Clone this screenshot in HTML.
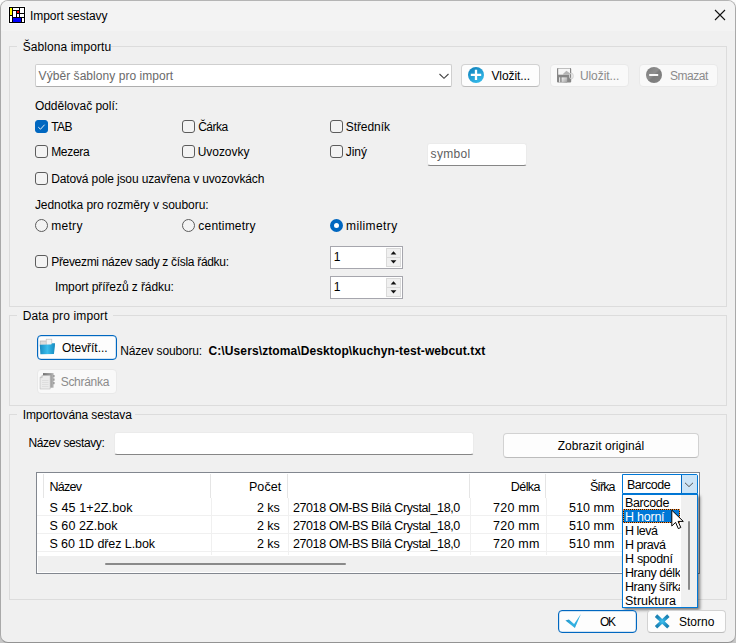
<!DOCTYPE html>
<html lang="cs">
<head>
<meta charset="utf-8">
<title>Import sestavy</title>
<style>
*{box-sizing:border-box;margin:0;padding:0}
html,body{width:736px;height:643px;overflow:hidden;background:linear-gradient(#fbfbfb 50%,#c6c6c6 50%)}
body{font-family:"Liberation Sans",sans-serif;font-size:12px;color:#000;position:relative}
#win{position:absolute;left:0;top:0;width:736px;height:643px;background:#f0f0f0;border:1px solid #a9a9a9;border-top-color:#b4b4b4;border-bottom-color:#939393;border-radius:8px;overflow:hidden}
#title{position:absolute;left:0;top:0;width:734px;height:30px;background:#f3f3f3}
.abs,.t,.grp,.btn,.cb,.rb,.inp,.spin{position:absolute}
.t{white-space:pre;line-height:16px;margin-top:-12px}
.grp{border:1px solid #dcdcdc}
.gl{background:#f0f0f0}
.btn{background:#fdfdfd;border:1px solid #d2d2d2;border-bottom-color:#bcbcbc;border-radius:4px}
.btn.dis{background:#f9f9f9;border-color:#e9e9e9}
.btn.foc{border:1px solid #0067c0;box-shadow:inset 0 0 0 .5px rgba(0,103,192,.35)}
.cb{width:13px;height:13px;border:1px solid #5c5c5c;border-radius:3px;background:#f3f3f3}
.cb.on{background:#0067c0;border-color:#0067c0}
.rb{width:13px;height:13px;border:1px solid #5c5c5c;border-radius:50%;background:#f3f3f3}
.rb.on{border:4px solid #0067c0;background:#fff}
.inp{background:#fff;border:1px solid #ebebeb;border-bottom:1px solid #868686;border-radius:3px}
.spin{background:#fff;border:1px solid #a6a6ad;}
.sb{position:absolute;width:15px;height:10px;background:#f0f0f0;border:1px solid #dadada}
.li{position:absolute;left:2px;white-space:pre;font-size:12.5px;line-height:14px;height:14px;letter-spacing:-0.45px}
.hl{position:absolute;height:1px;background:#f0f0f0}
.vl{position:absolute;width:1px;background:#e5e5e5}
</style>
</head>
<body>
<div id="win">
<div id="title"></div>
<!-- app icon -->
<svg class="abs" style="left:7px;top:5px" width="18" height="18" viewBox="-1 -1 18 18" shape-rendering="crispEdges">
<rect x="-1" y="-1" width="18" height="18" fill="#fafafa"/>
<rect x="0" y="0" width="16" height="16" fill="#000"/>
<rect x="1" y="1" width="2" height="7" fill="#ffff00"/>
<rect x="1" y="9" width="2" height="6" fill="#fff"/>
<rect x="4" y="1" width="6" height="2" fill="#fff"/>
<rect x="11" y="1" width="4" height="5" fill="#fff"/>
<rect x="11" y="7" width="4" height="3" fill="#fff"/>
<rect x="4" y="4" width="3" height="6" fill="#fff"/>
<rect x="8" y="4" width="2" height="2" fill="#ff0000"/>
<rect x="8" y="7" width="2" height="3" fill="#fff"/>
<rect x="4" y="11" width="8" height="4" fill="#0000ff"/>
<rect x="13" y="11" width="2" height="4" fill="#fff"/>
</svg>
<!-- close X -->
<svg class="abs" style="left:713px;top:8px" width="12" height="12" viewBox="0 0 12 12"><path d="M1 1L11 11M11 1L1 11" stroke="#111" stroke-width="1.1" fill="none"/></svg>

<!-- group 1 -->
<div class="grp" style="left:8px;top:45px;width:718px;height:261px"></div>
<div class="abs gl" style="left:16px;top:38px;width:94px;height:16px"></div>
<!-- combo -->
<div class="inp" style="left:34px;top:63px;width:417px;height:23px;border-color:#cfcfcf;border-bottom-color:#aeaeae;border-radius:2px"></div>
<svg class="abs" style="left:437px;top:71px" width="12" height="8" viewBox="0 0 12 8"><path d="M1.5 2L6 6.3L10.5 2" stroke="#444" stroke-width="1.1" fill="none"/></svg>
<!-- buttons -->
<div class="btn" style="left:460px;top:63px;width:79px;height:23px"></div>
<svg class="abs" style="left:467px;top:66px" width="16" height="16" viewBox="0 0 16 16">
<defs><linearGradient id="gb" x1="0.1" y1="0" x2="0.7" y2="1"><stop offset="0" stop-color="#0f80bb"/><stop offset="1" stop-color="#36bbea"/></linearGradient></defs>
<circle cx="8" cy="8" r="8" fill="url(#gb)"/><path d="M8 2.7V13.1M2.8 7.9H13.2" stroke="#fff" stroke-width="2.3"/></svg>
<div class="btn dis" style="left:549px;top:63px;width:79px;height:23px"></div>
<svg class="abs" style="left:555px;top:66px" width="18" height="17" viewBox="0 0 18 17">
<defs><linearGradient id="gs" x1="0" y1="0" x2="1" y2="1"><stop offset="0" stop-color="#f4f4f4"/><stop offset="1" stop-color="#9a9a9a"/></linearGradient></defs>
<rect x="1" y="1.1" width="14.2" height="14.5" rx="1" fill="#868686"/>
<rect x="2.2" y="1.5" width="11.8" height="6.2" fill="#f6f6f6"/>
<path d="M7.5 6.6L10.4 3.8L14 6.2L14 7.7L7 7.7Z" fill="#b4b4b4"/>
<rect x="3.1" y="10.3" width="1.1" height="5" fill="#ececec"/>
<rect x="5.6" y="10.4" width="5.6" height="5.2" fill="url(#gs)"/>
<ellipse cx="15.3" cy="9" rx="1.9" ry="3" fill="none" stroke="#cdcdcd" stroke-width="1"/>
</svg>
<div class="btn dis" style="left:638px;top:63px;width:79px;height:23px"></div>
<svg class="abs" style="left:645px;top:66px" width="16" height="16" viewBox="0 0 16 16">
<defs><linearGradient id="gg" x1="0" y1="0" x2="1" y2="1"><stop offset="0" stop-color="#7a7a7a"/><stop offset="0.45" stop-color="#8e8e8e"/><stop offset="0.55" stop-color="#7c7c7c"/><stop offset="1" stop-color="#868686"/></linearGradient></defs>
<circle cx="8" cy="8" r="8" fill="url(#gg)"/><path d="M3.2 8H12.2" stroke="#f8f8f8" stroke-width="2.1"/></svg>

<!-- checkboxes -->
<div class="cb on" style="left:34px;top:119px"></div>
<svg class="abs" style="left:34px;top:119px" width="13" height="13" viewBox="0 0 13 13"><path d="M3.3 7.2L5.5 9.2L9.6 4.7" stroke="#e4effa" stroke-width="1" fill="none"/></svg>
<div class="cb" style="left:181px;top:119px"></div>
<div class="cb" style="left:329px;top:119px"></div>
<div class="cb" style="left:34px;top:144px"></div>
<div class="cb" style="left:181px;top:144px"></div>
<div class="cb" style="left:329px;top:144px"></div>
<div class="inp" style="left:426px;top:142px;width:100px;height:23px"></div>
<div class="cb" style="left:34px;top:171px"></div>
<!-- radios -->
<div class="rb" style="left:34px;top:218px"></div>
<div class="rb" style="left:181px;top:218px"></div>
<div class="rb on" style="left:329px;top:218px"></div>
<div class="cb" style="left:34px;top:254px"></div>
<!-- spinners -->
<div class="spin" style="left:329px;top:245px;width:73px;height:23px"><div class="sb" style="left:55px;top:1px"></div><div class="sb" style="left:55px;top:10px"></div>
<svg class="abs" style="left:59px;top:3px" width="7" height="15" viewBox="0 0 7 15"><path d="M0.6 4.5L3.5 1.2L6.4 4.5ZM0.6 10.2L3.5 13.5L6.4 10.2Z" fill="#111"/></svg></div>
<div class="spin" style="left:329px;top:275px;width:73px;height:23px"><div class="sb" style="left:55px;top:1px"></div><div class="sb" style="left:55px;top:10px"></div>
<svg class="abs" style="left:59px;top:3px" width="7" height="15" viewBox="0 0 7 15"><path d="M0.6 4.5L3.5 1.2L6.4 4.5ZM0.6 10.2L3.5 13.5L6.4 10.2Z" fill="#111"/></svg></div>

<!-- group 2 -->
<div class="grp" style="left:8px;top:314px;width:718px;height:91px"></div>
<div class="abs gl" style="left:16px;top:307px;width:96px;height:16px"></div>
<div class="btn foc" style="left:36px;top:334px;width:80px;height:25px"></div>
<svg class="abs" style="left:38px;top:337px" width="18" height="18" viewBox="0 0 18 18">
<defs><linearGradient id="gf" x1="0" y1="0" x2="1" y2="0"><stop offset="0" stop-color="#1a88bc"/><stop offset="0.12" stop-color="#2098cc"/><stop offset="0.5" stop-color="#3abdec"/><stop offset="0.85" stop-color="#1f9ace"/><stop offset="1" stop-color="#1787ba"/></linearGradient></defs>
<rect x="1.2" y="3" width="6.2" height="5" fill="#dcdcdc" stroke="#b4b4b4" stroke-width=".7"/>
<rect x="7.2" y="1.2" width="5.6" height="6" fill="#f4f4f4" stroke="#c2c2c2" stroke-width=".7"/>
<path d="M0.8 6.8L12.2 6.5L13.2 5.3L16 5.3L15.9 8L14.9 16L1.4 16.3Z" fill="url(#gf)"/>
</svg>
<div class="btn dis" style="left:36px;top:368px;width:80px;height:25px"></div>
<svg class="abs" style="left:38px;top:371px" width="18" height="19" viewBox="0 0 18 19">
<defs><linearGradient id="gc" x1="0" y1="0" x2="1" y2="0"><stop offset="0" stop-color="#6e6e6e"/><stop offset="0.7" stop-color="#9a9a9a"/><stop offset="1" stop-color="#b8b8b8"/></linearGradient></defs>
<rect x="4" y="1.1" width="10.6" height="14.6" fill="url(#gc)"/>
<rect x="14.3" y="3" width="1.2" height="2.2" fill="#8a8a8a"/><rect x="14.3" y="6.5" width="1.2" height="2.2" fill="#8a8a8a"/><rect x="14.3" y="10" width="1.2" height="2.2" fill="#8a8a8a"/>
<path d="M3.2 3.4H11.2V17H1.1V5.6Z" fill="#ebebeb" stroke="#bcbcbc" stroke-width=".6"/>
<path d="M3.2 3.4V5.6H1.1" fill="none" stroke="#b0b0b0" stroke-width=".6"/>
<path d="M3 8.5H9.5M3 10.5H9.5M3 12.5H9.5M3 14.5H9.5" stroke="#dadada" stroke-width=".8"/>
</svg>

<!-- group 3 -->
<div class="grp" style="left:8px;top:413px;width:718px;height:186px"></div>
<div class="abs gl" style="left:16px;top:406px;width:118px;height:16px"></div>
<div class="inp" style="left:113px;top:431px;width:360px;height:23px"></div>
<div class="btn" style="left:502px;top:432px;width:196px;height:25px"></div>

<!-- grid -->
<div class="abs" style="left:35px;top:471px;width:664px;height:102px;background:#fff;border:1px solid #82878f"></div>
<div class="abs" style="left:37px;top:555px;width:660px;height:16px;background:#f0f0f0"></div>
<div class="abs" style="left:104px;top:562px;width:241px;height:2px;background:#8a8a8a;border-radius:1px"></div>
<div class="vl" style="left:42px;top:473px;height:24px"></div>
<div class="vl" style="left:209px;top:473px;height:24px"></div>
<div class="vl" style="left:286px;top:473px;height:24px"></div>
<div class="vl" style="left:468px;top:473px;height:24px"></div>
<div class="vl" style="left:544px;top:473px;height:24px"></div>
<div class="vl" style="left:210px;top:497px;height:57px;background:#f0f0f0"></div>
<div class="vl" style="left:287px;top:497px;height:57px;background:#f0f0f0"></div>
<div class="vl" style="left:469px;top:497px;height:57px;background:#f0f0f0"></div>
<div class="vl" style="left:545px;top:497px;height:57px;background:#f0f0f0"></div>
<div class="hl" style="left:36px;top:514px;width:586px"></div>
<div class="hl" style="left:36px;top:532px;width:586px"></div>
<div class="hl" style="left:36px;top:550px;width:586px"></div>
<!-- grid combo -->
<div class="abs" style="left:621px;top:473px;width:76px;height:20px;background:#fff;border:1px solid #0078d7;border-radius:0 2px 0 0"></div>
<div class="abs" style="left:680px;top:474px;width:16px;height:18px;background:#cce4f7;border-left:1px solid #0067c0"></div>
<svg class="abs" style="left:682px;top:480px" width="12" height="8" viewBox="0 0 12 8"><path d="M2 1.8L6 5.6L10 1.8" stroke="#555" stroke-width="1" fill="none"/></svg>
<!-- dropdown list -->
<div class="abs" style="left:621px;top:493px;width:76px;height:114px;background:#fff;border:1px solid #0078d7;box-shadow:2px 2px 3px rgba(0,0,0,.5)"></div>
<div class="abs" style="left:680px;top:494px;width:16px;height:112px;background:#f0f0f0"></div>
<div class="abs" style="left:622px;top:508px;width:57px;height:14px;background:#0078d7;border:1px solid #1a1a1a"></div>
<div class="abs" style="left:622px;top:508px;width:57px;height:14px;border:1px dotted #ff8a2a"></div>
<div class="abs" style="left:687px;top:520px;width:2px;height:69px;background:#8a8a8a;border-radius:1px"></div>
<div class="abs" id="list" style="left:622px;top:494px;width:57px;height:112px;overflow:hidden"><div class="li" style="top:1px;color:#000;letter-spacing:-0.360px">Barcode</div><div class="li" style="top:15px;color:#fff;letter-spacing:-0.233px">H horní</div><div class="li" style="top:29px;color:#000;letter-spacing:-0.508px">H levá</div><div class="li" style="top:43px;color:#000;letter-spacing:-0.480px">H pravá</div><div class="li" style="top:57px;color:#000;letter-spacing:-0.304px">H spodní</div><div class="li" style="top:71px;color:#000;letter-spacing:-0.420px">Hrany délka</div><div class="li" style="top:85px;color:#000;letter-spacing:-0.420px">Hrany šířka</div><div class="li" style="top:99px;color:#000;letter-spacing:0.035px">Struktura</div></div>
<!-- cursor -->
<svg class="abs" style="left:670px;top:508px" width="14" height="21" viewBox="0 0 14 21"><path d="M0.8 1.2V17L4.6 13.4L7.3 19.6L9.8 18.5L7.1 12.4H12.3Z" fill="#fff" stroke="#000" stroke-width="1"/></svg>

<!-- bottom buttons -->
<div class="btn foc" style="left:557px;top:609px;width:79px;height:23px"></div>
<svg class="abs" style="left:563px;top:612px" width="19" height="17" viewBox="0 0 19 17">
<defs><linearGradient id="gk" x1="0" y1="0" x2="1" y2="1"><stop offset="0" stop-color="#1c86bb"/><stop offset="0.6" stop-color="#35b4e4"/><stop offset="1" stop-color="#2299cf"/></linearGradient></defs>
<path d="M1.4 7.5L4.9 6.6L10.1 10.9L16.9 1.1L10.9 14.9Z" fill="url(#gk)"/></svg>
<div class="btn" style="left:646px;top:609px;width:79px;height:23px"></div>
<svg class="abs" style="left:652px;top:612px" width="19" height="18" viewBox="0 0 19 18">
<defs><radialGradient id="gx" cx="0.5" cy="0.5" r="0.5"><stop offset="0" stop-color="#40c0ee"/><stop offset="0.5" stop-color="#2aa4d8"/><stop offset="1" stop-color="#1c84b6"/></radialGradient></defs>
<path d="M3 2.6L15.4 14.2M15.4 2.6L3 14.2" stroke="url(#gx)" stroke-width="3.5" fill="none"/></svg>

<span class="t " style="left:28.9px;top:19px;font-size:12px;letter-spacing:-0.025px;">Import sestavy</span>
<span class="t gl" style="left:21.7px;top:50px;font-size:12px;letter-spacing:0.072px;">Šablona importu</span>
<span class="t " style="left:37.6px;top:79px;font-size:12px;letter-spacing:0.052px;color:#6a6a6a;">Výběr šablony pro import</span>
<span class="t " style="left:490.4px;top:79px;font-size:12px;letter-spacing:-0.082px;">Vložit...</span>
<span class="t " style="left:578.9px;top:79px;font-size:12px;letter-spacing:-0.064px;color:#8b8b8b;">Uložit...</span>
<span class="t " style="left:668.9px;top:79px;font-size:12px;letter-spacing:-0.438px;color:#8b8b8b;">Smazat</span>
<span class="t " style="left:33.9px;top:109px;font-size:12px;letter-spacing:-0.014px;">Oddělovač polí:</span>
<span class="t " style="left:50.2px;top:130px;font-size:12px;letter-spacing:-0.527px;">TAB</span>
<span class="t " style="left:197.2px;top:130px;font-size:12px;letter-spacing:-0.529px;">Čárka</span>
<span class="t " style="left:344.7px;top:130px;font-size:12px;letter-spacing:-0.058px;">Středník</span>
<span class="t " style="left:50.2px;top:155px;font-size:12px;letter-spacing:-0.323px;">Mezera</span>
<span class="t " style="left:196.7px;top:155px;font-size:12px;letter-spacing:-0.045px;">Uvozovky</span>
<span class="t " style="left:344.7px;top:155px;font-size:12px;letter-spacing:-0.048px;">Jiný</span>
<span class="t " style="left:429.6px;top:157px;font-size:12px;letter-spacing:0.297px;color:#5e5e5e;">symbol</span>
<span class="t " style="left:50.2px;top:182px;font-size:12px;letter-spacing:-0.134px;">Datová pole jsou uzavřena v uvozovkách</span>
<span class="t " style="left:33.9px;top:208px;font-size:12px;letter-spacing:-0.057px;">Jednotka pro rozměry v souboru:</span>
<span class="t " style="left:50.2px;top:229px;font-size:12px;letter-spacing:0.300px;">metry</span>
<span class="t " style="left:197.3px;top:229px;font-size:12px;letter-spacing:0.205px;">centimetry</span>
<span class="t " style="left:345.0px;top:229px;font-size:12px;letter-spacing:0.400px;">milimetry</span>
<span class="t " style="left:50.2px;top:265px;font-size:12px;letter-spacing:-0.311px;">Převezmi název sady z čísla řádku:</span>
<span class="t " style="left:53.9px;top:290px;font-size:12px;letter-spacing:-0.078px;">Import přířezů z řádku:</span>
<span class="t " style="left:332.7px;top:260px;font-size:12px;letter-spacing:0.000px;">1</span>
<span class="t " style="left:332.7px;top:290px;font-size:12px;letter-spacing:0.000px;">1</span>
<span class="t gl" style="left:21.7px;top:319px;font-size:12px;letter-spacing:0.157px;">Data pro import</span>
<span class="t " style="left:60.9px;top:351px;font-size:12px;letter-spacing:-0.035px;">Otevřít...</span>
<span class="t " style="left:119.2px;top:354px;font-size:12px;letter-spacing:-0.165px;">Název souboru:</span>
<span class="t " style="left:207.5px;top:354px;font-size:12px;letter-spacing:0.105px;font-weight:700;">C:\Users\ztoma\Desktop\kuchyn-test-webcut.txt</span>
<span class="t " style="left:59.7px;top:385px;font-size:12px;letter-spacing:-0.286px;color:#8b8b8b;">Schránka</span>
<span class="t gl" style="left:21.7px;top:418px;font-size:12px;letter-spacing:-0.123px;">Importována sestava</span>
<span class="t " style="left:27.4px;top:446px;font-size:12px;letter-spacing:-0.383px;">Název sestavy:</span>
<span class="t " style="left:556.7px;top:449px;font-size:12px;letter-spacing:0.064px;">Zobrazit originál</span>
<span class="t " style="left:598.9px;top:625px;font-size:12px;letter-spacing:-1.200px;">OK</span>
<span class="t " style="left:678.0px;top:625px;font-size:12px;letter-spacing:0.008px;">Storno</span>
<span class="t " style="left:48.4px;top:490px;font-size:12.5px;letter-spacing:-0.684px;">Název</span>
<span class="t " style="left:247.9px;top:490px;font-size:12.5px;letter-spacing:0.108px;">Počet</span>
<span class="t " style="left:509.8px;top:490px;font-size:12.5px;letter-spacing:-0.567px;">Délka</span>
<span class="t " style="left:588.9px;top:490px;font-size:12.5px;letter-spacing:-0.897px;">Šířka</span>
<span class="t " style="left:48.4px;top:511px;font-size:12.5px;letter-spacing:0.129px;">S 45 1+2Z.bok</span>
<span class="t " style="left:256.0px;top:511px;font-size:12.5px;letter-spacing:-0.046px;">2 ks</span>
<span class="t " style="left:291.9px;top:511px;font-size:12.5px;letter-spacing:-0.374px;">27018 OM-BS Bílá Crystal_18,0</span>
<span class="t " style="left:492.1px;top:511px;font-size:12.5px;letter-spacing:0.209px;">720 mm</span>
<span class="t " style="left:567.9px;top:511px;font-size:12.5px;letter-spacing:0.049px;">510 mm</span>
<span class="t " style="left:48.4px;top:529px;font-size:12.5px;letter-spacing:0.079px;">S 60 2Z.bok</span>
<span class="t " style="left:256.0px;top:529px;font-size:12.5px;letter-spacing:-0.046px;">2 ks</span>
<span class="t " style="left:291.9px;top:529px;font-size:12.5px;letter-spacing:-0.374px;">27018 OM-BS Bílá Crystal_18,0</span>
<span class="t " style="left:492.1px;top:529px;font-size:12.5px;letter-spacing:0.209px;">720 mm</span>
<span class="t " style="left:567.9px;top:529px;font-size:12.5px;letter-spacing:0.049px;">510 mm</span>
<span class="t " style="left:48.4px;top:547px;font-size:12.5px;letter-spacing:-0.077px;">S 60 1D dřez L.bok</span>
<span class="t " style="left:256.0px;top:547px;font-size:12.5px;letter-spacing:-0.046px;">2 ks</span>
<span class="t " style="left:291.9px;top:547px;font-size:12.5px;letter-spacing:-0.374px;">27018 OM-BS Bílá Crystal_18,0</span>
<span class="t " style="left:492.1px;top:547px;font-size:12.5px;letter-spacing:0.209px;">720 mm</span>
<span class="t " style="left:567.9px;top:547px;font-size:12.5px;letter-spacing:0.049px;">510 mm</span>
<span class="t " style="left:625.9px;top:488px;font-size:12.5px;letter-spacing:-0.477px;">Barcode</span>
</div>
</body>
</html>
